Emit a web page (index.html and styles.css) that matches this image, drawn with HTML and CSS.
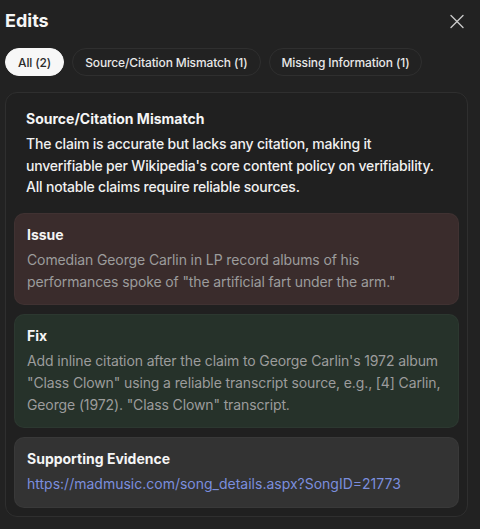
FILE: index.html
```html
<!DOCTYPE html>
<html lang="en">
<head>
<meta charset="utf-8">
<title>Edits</title>
<link rel="stylesheet" href="styles.css">
</head>
<body>
<div class="panel">
  <header class="panel-header">
    <h1 class="panel-title">Edits</h1>
    <button class="close-btn" aria-label="Close">
      <svg width="24" height="24" viewBox="0 0 24 24" fill="none" stroke="currentColor" stroke-width="1.4" stroke-linecap="round">
        <path d="M6 6.5 L18 18.5 M18 6.5 L6 18.5"/>
      </svg>
    </button>
  </header>
  <nav class="chips">
    <span class="chip chip-active">All (2)</span>
    <span class="chip">Source/Citation Mismatch (1)</span>
    <span class="chip">Missing Information (1)</span>
  </nav>
  <section class="card">
    <div class="card-head">
      <h2 class="card-title">Source/Citation Mismatch</h2>
      <p class="card-desc">The claim is accurate but lacks any citation, making it unverifiable per Wikipedia's core content policy on verifiability. All notable claims require reliable sources.</p>
    </div>
    <div class="box box-issue">
      <h3 class="box-label">Issue</h3>
      <p class="box-text">Comedian George Carlin in LP record albums of his performances spoke of "the artificial fart under the arm."</p>
    </div>
    <div class="box box-fix">
      <h3 class="box-label">Fix</h3>
      <p class="box-text">Add inline citation after the claim to George Carlin's 1972 album "Class Clown" using a reliable transcript source, e.g., [4] Carlin, George (1972). "Class Clown" transcript.</p>
    </div>
    <div class="box box-evidence">
      <h3 class="box-label">Supporting Evidence</h3>
      <a class="box-link" href="#">https://madmusic.com/song_details.aspx?SongID=21773</a>
    </div>
  </section>
</div>
</body>
</html>
```

FILE: styles.css
```css
* { box-sizing: border-box; }
html, body { margin: 0; padding: 0; }
body {
  background: #222222;
  color: #f2f2f2;
  font-family: Inter, "Noto Sans", sans-serif;
  -webkit-font-smoothing: antialiased;
}
.panel {
  padding: 9px 12px 0 5px;
}
.panel-header {
  display: flex;
  align-items: center;
  justify-content: space-between;
  height: 24px;
}
.panel-title {
  margin: 0;
  font-size: 18px;
  line-height: 24px;
  font-weight: 700;
  color: #f5f5f5;
}
.close-btn {
  background: none;
  border: 0;
  padding: 0;
  margin-right: -1px;
  width: 24px;
  height: 24px;
  color: #c8c8c8;
  display: flex;
}
.chips {
  display: flex;
  gap: 8px;
  margin-top: 15px;
}
.chip {
  height: 28px;
  display: inline-flex;
  align-items: center;
  padding: 0 12px;
  border: 1px solid #2f2f2f;
  border-radius: 14px;
  font-size: 12px;
  font-weight: 500;
  letter-spacing: -0.12px;
  color: #e8e8e8;
  white-space: nowrap;
}
.chip-active {
  background: #f7f7f7;
  border-color: #f7f7f7;
  color: #2a2a2a;
}
.card {
  margin-top: 16px;
  border: 1px solid #2f2f2f;
  border-radius: 12px;
  padding: 16px 8px 8px;
  background: #202020;
  display: flex;
  flex-direction: column;
  gap: 9px;
}
.card-head {
  padding: 0 12px;
  margin-bottom: 6px;
}
.card-title {
  margin: 0;
  font-size: 14px;
  line-height: 20px;
  font-weight: 700;
  color: #f5f5f5;
}
.card-desc {
  margin: 4px 0 0;
  font-size: 14px;
  line-height: 21.5px;
  font-weight: 500;
  letter-spacing: -0.2px;
  color: #f0f0f0;
}
.box {
  border-radius: 10px;
  padding: 11px 12px 11px;
  border: 1px solid rgba(255,255,255,0.03);
}
.box-issue { background: #3a2c2c; }
.box-fix { background: #26322a; }
.box-evidence { background: #333333; padding-bottom: 12px; }
.box-label {
  margin: 0;
  font-size: 14px;
  line-height: 20px;
  font-weight: 700;
  color: #f5f5f5;
}
.box-text {
  margin: 4px 0 0;
  font-size: 14px;
  line-height: 22px;
  letter-spacing: -0.12px;
  color: #9c9c9c;
}
.box-link {
  display: block;
  margin-top: 4px;
  font-size: 14px;
  line-height: 22px;
  color: #7b8ede;
  text-decoration: none;
}
```
